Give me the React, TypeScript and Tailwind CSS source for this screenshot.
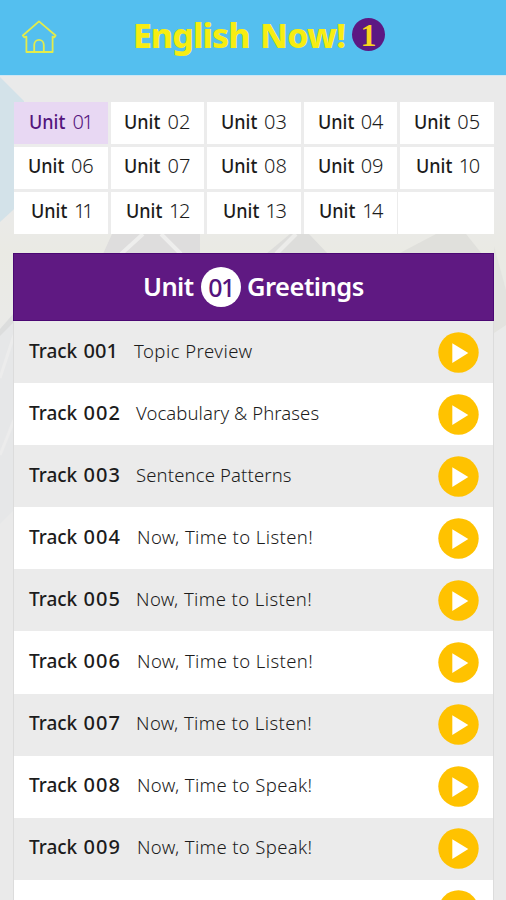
import React, { useState } from "react";

interface Track {
  id: string;
  title: string;
  // the number column and the letter spacing differ a little per row
  numberClass: string;
  titleClass: string;
}

const units: string[] = ["01", "02", "03", "04", "05", "06", "07", "08", "09", "10", "11", "12", "13", "14"];

const tracks: Track[] = [
  { id: "001", title: "Topic Preview", numberClass: "w-[105px]", titleClass: "tracking-[0.46px]" },
  { id: "002", title: "Vocabulary & Phrases", numberClass: "w-[107px]", titleClass: "tracking-[0.08px]" },
  { id: "003", title: "Sentence Patterns", numberClass: "w-[107px]", titleClass: "tracking-[0.14px]" },
  { id: "004", title: "Now, Time to Listen!", numberClass: "w-[108px]", titleClass: "tracking-[0.4px]" },
  { id: "005", title: "Now, Time to Listen!", numberClass: "w-[107px]", titleClass: "tracking-[0.4px]" },
  { id: "006", title: "Now, Time to Listen!", numberClass: "w-[108px]", titleClass: "tracking-[0.4px]" },
  { id: "007", title: "Now, Time to Listen!", numberClass: "w-[107px]", titleClass: "tracking-[0.4px]" },
  { id: "008", title: "Now, Time to Speak!", numberClass: "w-[108px]", titleClass: "tracking-[0.36px]" },
  { id: "009", title: "Now, Time to Speak!", numberClass: "w-[108px]", titleClass: "tracking-[0.36px]" },
  { id: "010", title: "Now, Time to Speak!", numberClass: "w-[108px]", titleClass: "tracking-[0.36px]" },
];

const HomeIcon = () => (
  <svg width="36" height="34" viewBox="0 0 36 34" fill="none" stroke="#e3ec4c" strokeWidth="1.8" strokeLinejoin="round">
    <path d="M18 1.4 L1.8 15.5 L3.2 17.3 L5.4 16.6 V32 H31.6 V16.6 L33.4 17.3 L34.6 15.5 Z" />
    <path d="M13.2 32 V25 A4.8 5.2 0 0 1 22.8 25 V32" />
  </svg>
);

const PlayIcon = () => (
  <svg className="block" width="41" height="41" viewBox="0 0 41 41">
    <circle cx="20.5" cy="20.5" r="20.2" fill="#ffc200" />
    <path d="M14.3 11.2 L30.3 21 L14.3 31 Z" fill="#fff" />
  </svg>
);

const Backdrop = () => (
  <svg className="absolute inset-0 -z-10" width="506" height="900" viewBox="0 0 506 900">
    <defs>
      <linearGradient id="sand" x1="0" y1="0" x2="0" y2="1">
        <stop offset="0" stopColor="#eaeaea" />
        <stop offset="0.4" stopColor="#eaeae4" />
        <stop offset="1" stopColor="#eaeae8" />
      </linearGradient>
    </defs>
    <rect width="506" height="900" fill="#eaeaea" />
    <rect y="200" width="506" height="130" fill="url(#sand)" />
    <path d="M0 77 L24 101 V200 L0 222 Z" fill="#d3e2e9" />
    <rect x="14" y="102" width="480" height="132" fill="#ececec" />
    <path d="M103 254 L112 234 H200 V254 Z" fill="#dedddd" />
    <path d="M121 254 L143 234 M181 254 L161 234" stroke="#eeeeed" strokeWidth="4" />
    <path d="M266 254 L290 234 H309 L328 254 Z" fill="#dddddb" />
    <path d="M276 254 L296 234" stroke="#ececea" strokeWidth="4" />
    <path d="M398 254 L436 234 H466 L482 254 Z" fill="#e0e0dc" />
    <path d="M0 330 L14 315 V510 L0 524 Z" fill="#e6e7e8" />
    <path d="M0 329 L14 313 V322 L0 336 Z" fill="#dcdddd" />
    <path d="M0 378 L14 335 M0 455 L14 420" stroke="#ececec" strokeWidth="3" />
    <path d="M494 246 L506 290 V325 L494 333 Z" fill="#e3e3df" />
  </svg>
);

const App: React.FC = () => {
  const [selectedUnit, setSelectedUnit] = useState<string>("01");

  const digitSpacing = (unit: string) => {
    if (unit === "11") return "tracking-[-3px]";
    return unit.includes("1") ? "tracking-[-1.5px]" : "tracking-normal";
  };

  return (
    <div className="relative isolate w-[506px] h-[900px] overflow-hidden font-['Noto_Sans','Open_Sans',sans-serif] text-[#1c1c1c]">
      <Backdrop />

      {/* Header */}
      <header className="flex h-[76px] items-start border-b border-[#cfe6f3] bg-[#54bfef]">
        <button className="ml-[21px] mt-5 w-[112px]">
          <HomeIcon />
        </button>
        <h1 className="mt-2.5 flex h-[50px] w-[217px] items-center gap-[8px] whitespace-nowrap text-[34px] font-extrabold leading-[50px] text-[#f7ed12]">
          <span className="w-[119px] tracking-[-1px]">English</span>
          <span className="tracking-[-0.8px]">Now!</span>
        </h1>
        <span className="ml-0.5 mt-[18px] flex size-[33px] items-center justify-center rounded-full bg-[#5c1883] font-['Liberation_Serif',serif] text-[32px] font-bold leading-none text-[#f9d51c]">
          1
        </span>
      </header>

      {/* Unit tabs */}
      <div className="ml-3.5 mt-[26px] grid h-[132px] w-[480px] grid-cols-5 grid-rows-3 gap-x-[3px] gap-y-[2.5px]">
        {units.map((unit) => (
          <button
            key={unit}
            onClick={() => setSelectedUnit(unit)}
            className={`flex items-center justify-center pb-[3px] text-[20px] leading-none ${
              selectedUnit === unit ? "bg-[#e8d8f3] text-[#54157d]" : "bg-white"
            }`}
          >
            <span className="w-[43px] origin-left scale-x-90 text-left font-medium">Unit</span>
            <span className={`font-light ${digitSpacing(unit)}`}>{unit}</span>
          </button>
        ))}
        <div className="-ml-0.5 bg-white" />
      </div>

      {/* Tracks */}
      <section className="mx-[13px] mt-[19px] w-[481px]">
        <h2 className="flex h-[68px] items-center border border-[#4b0873] bg-[#5f1982] text-[25.5px] font-semibold leading-10 text-white">
          <span className="ml-[129px] w-[58px] pb-0.5 tracking-[-0.6px]">Unit</span>
          <span className="flex size-10 items-center justify-center rounded-full bg-white text-[25px] font-medium tracking-[-1.5px] text-[#54157d]">
            {selectedUnit}
          </span>
          <span className="ml-[6px] pb-0.5 tracking-[-0.5px]">Greetings</span>
        </h2>
        <div className="border-x border-[#dcdcdc]">
          {tracks.map((track) => (
            <div key={track.id} className="flex h-[62.1px] items-center bg-white pl-[15px] pr-3.5 odd:bg-[#ebebeb]">
              <div className={`${track.numberClass} flex shrink-0 items-baseline pb-[3px] font-medium`}>
                <span className="w-[54.5px] text-[19px]">Track</span>
                <span className={`text-[20px] ${track.id === "001" ? "tracking-[0px]" : "tracking-[1px]"}`}>
                  {track.id}
                </span>
              </div>
              <div className={`${track.titleClass} whitespace-nowrap pb-[3px] text-[18.5px] font-light`}>{track.title}</div>
              <button className="ml-auto">
                <PlayIcon />
              </button>
            </div>
          ))}
        </div>
      </section>
    </div>
  );
};

export default App;
